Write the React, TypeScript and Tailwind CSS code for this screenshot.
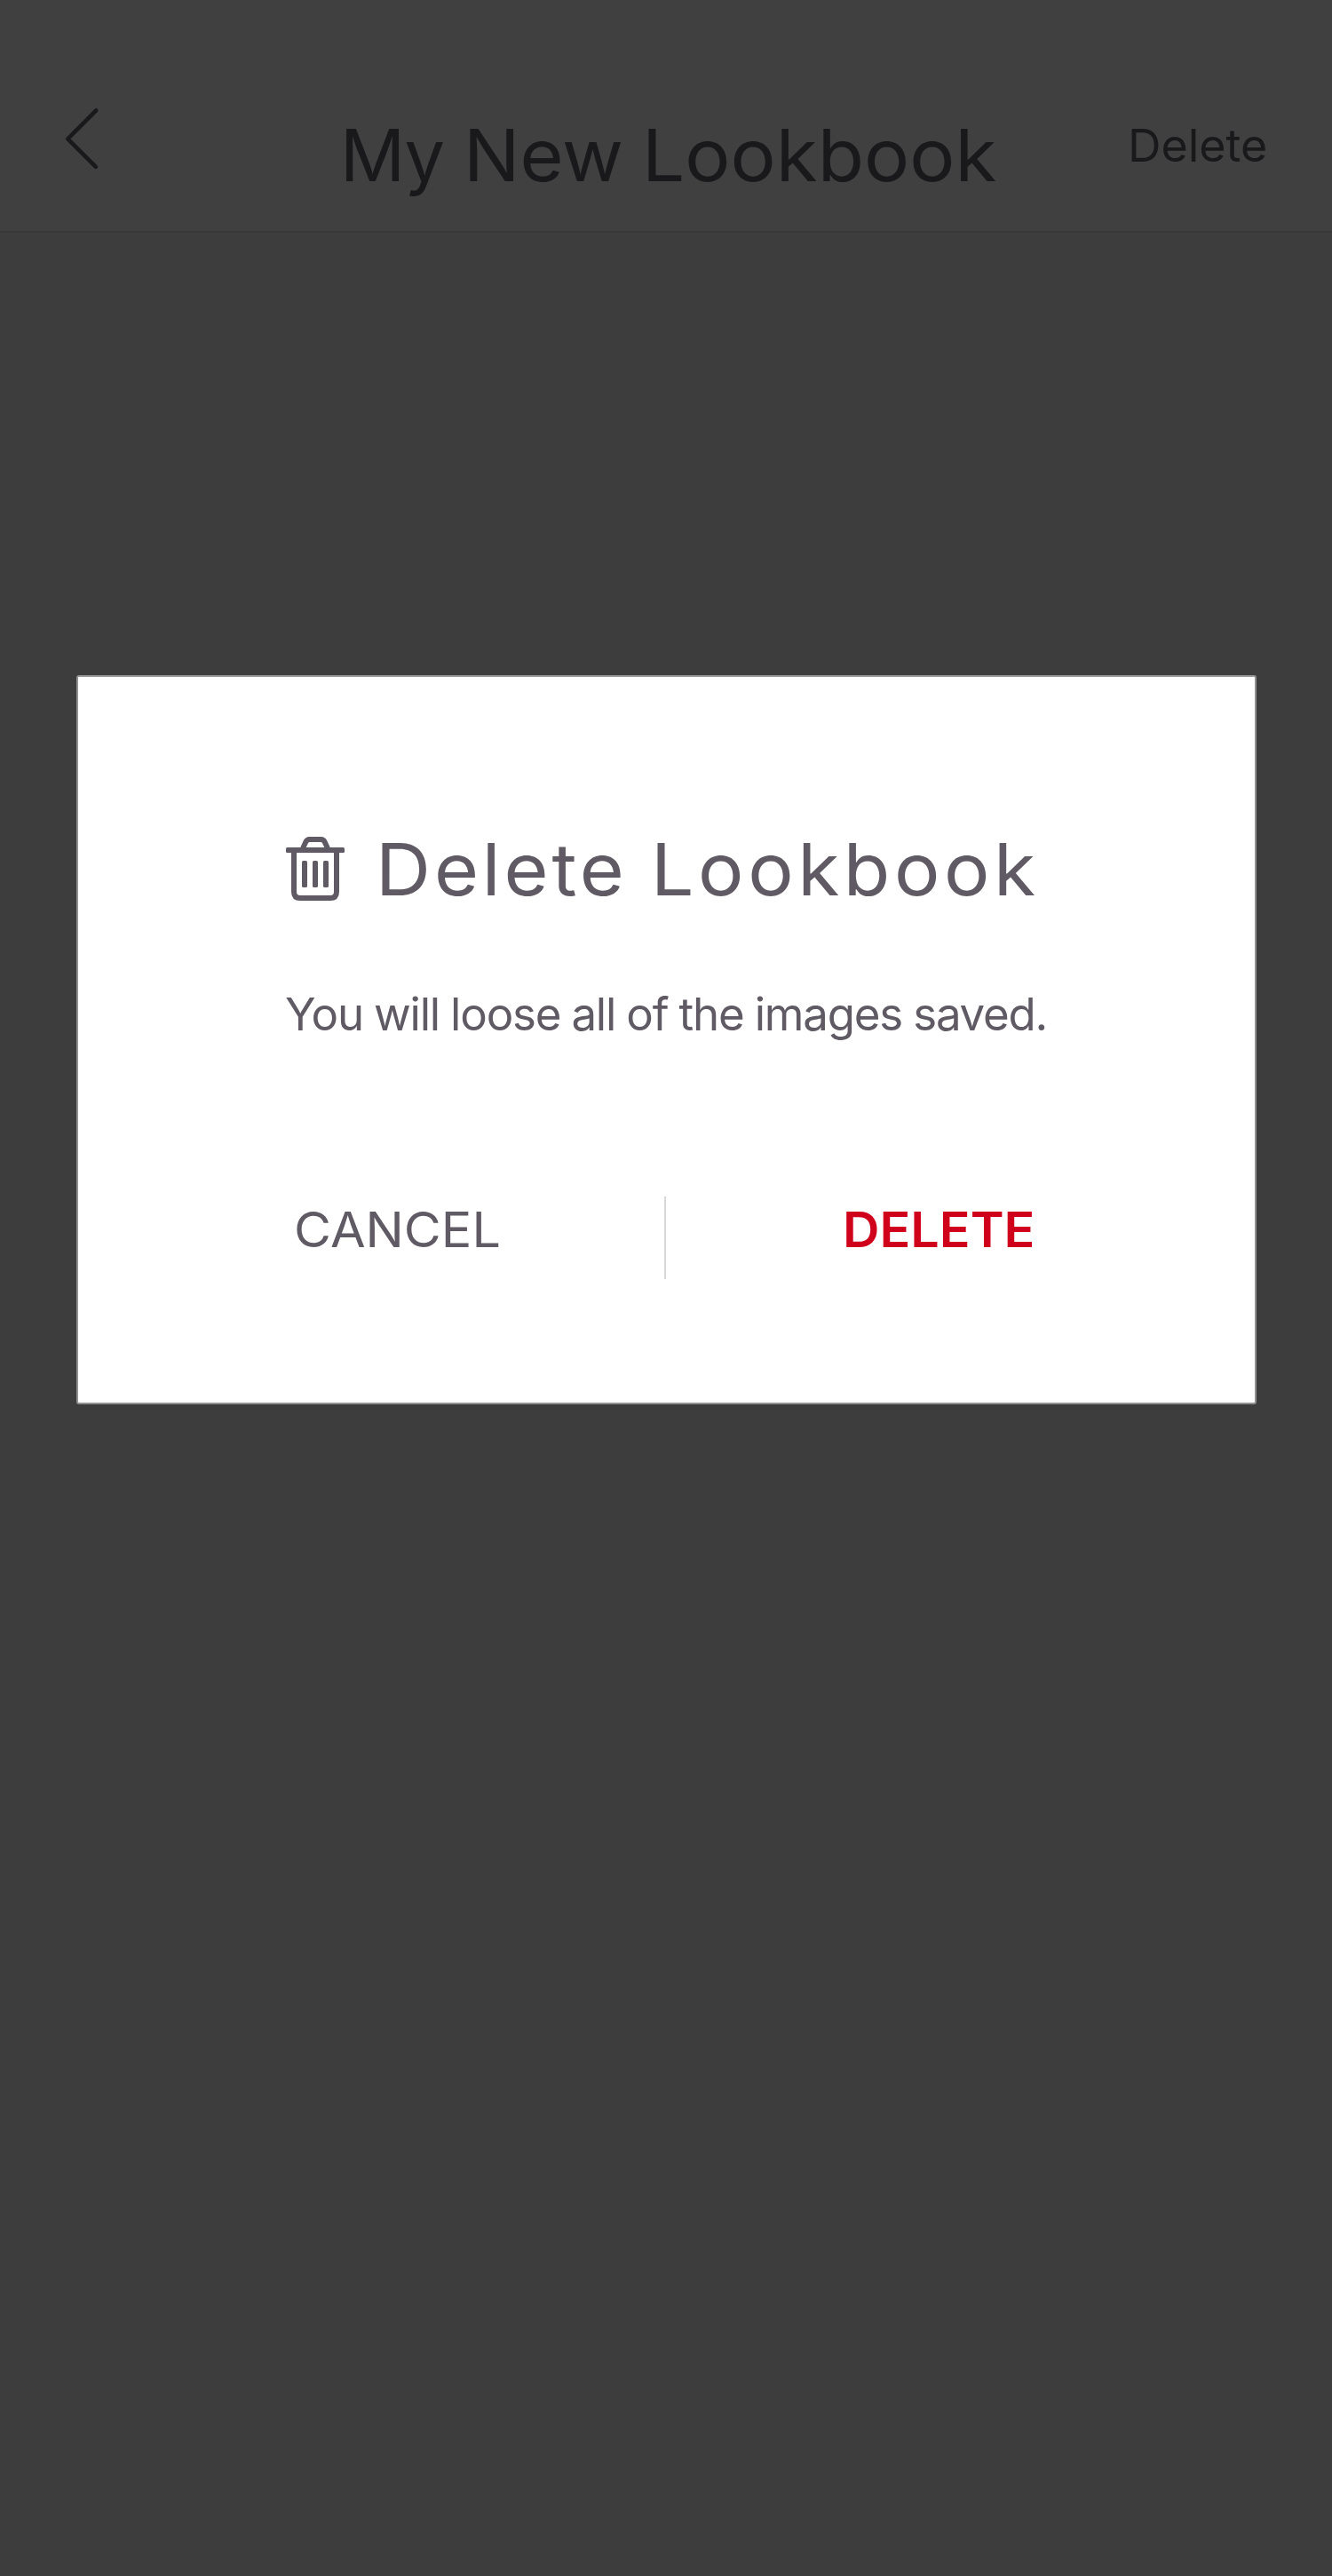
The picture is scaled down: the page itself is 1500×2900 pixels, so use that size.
function BackIcon() {
  return (
    <svg className="mt-[116px] ml-[68px] h-20 w-12" viewBox="0 0 48 80" fill="none">
      <path d="M40.2 8.3 8.3 40.3l31.6 31.5" stroke="#19181b" strokeWidth="4.6" strokeLinecap="round" strokeLinejoin="round" />
    </svg>
  );
}

function TrashIcon() {
  return (
    <svg className="mt-1 h-[72px] w-[66px] shrink-0" viewBox="0 0 66 72" fill="none">
      <rect y="12" width="66" height="6" rx="1.5" fill="#5f5a63" />
      <path d="M19 13l3-6.4Q23.3 3 26.5 3h13Q42.7 3 44 6.6L47 13" stroke="#5f5a63" strokeWidth="5.8" />
      <path d="M9 16v46q0 7 7 7h34q7 0 7-7V16" stroke="#5f5a63" strokeWidth="6" />
      <rect x="18" y="27" width="6" height="30" rx="1.5" fill="#5f5a63" />
      <rect x="30" y="27" width="6" height="30" rx="1.5" fill="#5f5a63" />
      <rect x="42" y="27" width="6" height="30" rx="1.5" fill="#5f5a63" />
    </svg>
  );
}

export default function App() {
  return (
    <div className="h-[2900px] w-[1500px] overflow-hidden bg-[#3d3d3d] font-['Inter',sans-serif] text-[#5f5a63]">
      <header className="flex h-[262px] items-start border-b-2 border-[#383838] bg-[#404040] leading-none text-[#19181b]">
        <BackIcon />
        <h1 className="mt-[135px] ml-[267px] flex w-[887px] text-[81px] leading-none font-[370] whitespace-nowrap">
          <span className="w-[139px] tracking-[-1px]">My</span>
          <span className="w-[201px] origin-left scale-x-[1.04] tracking-normal">New</span>
          <span className="origin-left scale-x-[1.055] tracking-normal">Lookbook</span>
        </h1>
        <button className="mt-[139px] origin-left scale-x-[1.028] text-[50.5px] leading-none font-[370]">Delete</button>
      </header>

      <section className="mt-[498px] ml-[86px] flex h-[821px] w-[1329px] flex-col rounded-[3px] border-2 border-[#929292] bg-white">
        <div className="mt-[176px] ml-[234px] flex items-start">
          <TrashIcon />
          <h2 className="mt-px ml-[35px] flex text-[81px] leading-none font-[370] whitespace-nowrap">
            <span className="w-[310px] origin-left scale-x-[1.06] tracking-[3.7px]">Delete</span>
            <span className="origin-left scale-x-[1.06] tracking-[4.3px]">Lookbook</span>
          </h2>
        </div>
        <p className="mt-[96px] ml-[233px] text-[51px] leading-none tracking-[-1.2px] [word-spacing:-1px] whitespace-nowrap">
          You will loose all of the images saved.
        </p>
        <div className="mt-[180px] flex h-[93px] items-start text-[54.5px] leading-none">
          <button className="mt-[10px] ml-[243px] origin-left scale-x-[1.055] text-left leading-none font-[370]">CANCEL</button>
          <div className="ml-auto h-[93px] w-0.5 bg-[#d8d8d8]" />
          <div className="flex w-[663px]">
            <button className="mt-[10px] ml-[199px] origin-left scale-x-[1.055] text-left leading-none font-semibold text-[#d0021b]">DELETE</button>
          </div>
        </div>
      </section>
    </div>
  );
}
